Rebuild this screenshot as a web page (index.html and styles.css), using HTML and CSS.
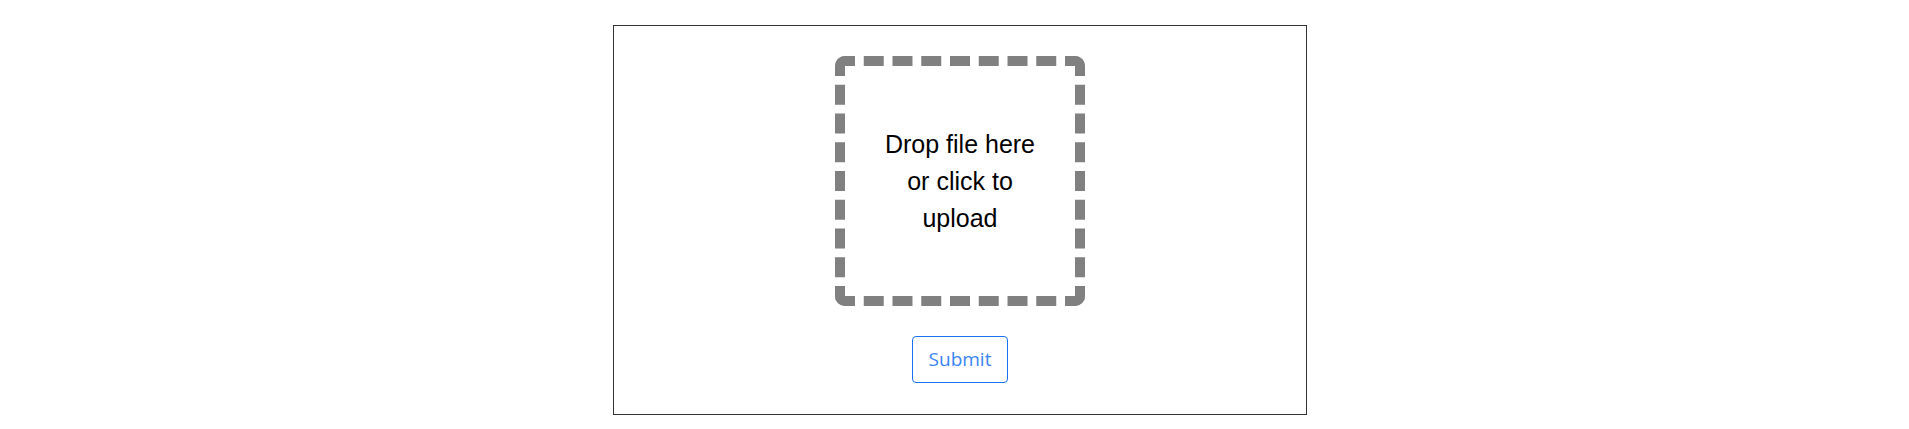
FILE: index.html
```html
<!DOCTYPE html>
<html lang="en">
<head>
<meta charset="utf-8">
<title>Upload</title>
<link rel="stylesheet" href="styles.css">
</head>
<body>
<div class="page">
  <form class="upload-card">
    <label class="dropzone">
      <span class="dropzone-text">Drop file here or click to upload</span>
    </label>
    <button type="button" class="submit-btn">Submit</button>
  </form>
</div>
</body>
</html>
```

FILE: styles.css
```css
html, body {
  margin: 0;
  padding: 0;
  background: #ffffff;
}

.page {
  display: flex;
  justify-content: center;
  padding: 25px 0 0 11px;
}

.upload-card {
  box-sizing: border-box;
  width: 694px;
  height: 390px;
  border: 1px solid #333333;
  padding: 30px 0;
  display: flex;
  flex-direction: column;
  align-items: center;
  gap: 30px;
  margin: 0;
}

.dropzone {
  box-sizing: border-box;
  width: 250px;
  height: 250px;
  border: 10px dashed #808080;
  border-radius: 10px;
  padding: 0 35px;
  display: flex;
  align-items: center;
  justify-content: center;
  text-align: center;
  cursor: pointer;
}

.dropzone-text {
  font-family: "Liberation Sans", Arial, sans-serif;
  font-size: 25px;
  line-height: 37px;
  color: #000000;
}

.submit-btn {
  box-sizing: border-box;
  height: 47px;
  padding: 0 16px;
  background: #ffffff;
  border: 1px solid #1a73f5;
  border-radius: 4px;
  color: #3a85f5;
  font-family: "Open Sans", "Noto Sans", sans-serif;
  font-size: 19px;
  line-height: 25px;
  cursor: pointer;
}
```
